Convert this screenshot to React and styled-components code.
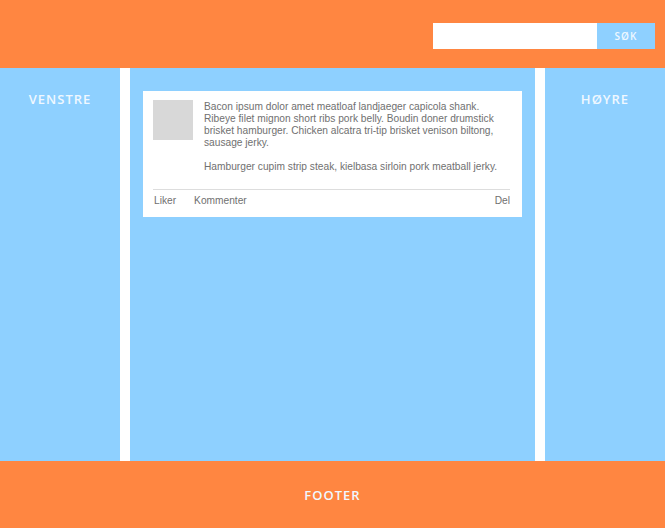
import styled, { createGlobalStyle } from "styled-components";

const GlobalStyle = createGlobalStyle`
  html, body {
    margin: 0;
    padding: 0;
    background: #fff;
  }
  * { box-sizing: border-box; }
`;

const Page = styled.div`
  display: flex;
  flex-direction: column;
  height: 100vh;
  font-family: "Liberation Sans", Arial, sans-serif;
`;

const Header = styled.header`
  height: 68px;
  background: #ff8641;
  display: flex;
  justify-content: flex-end;
  align-items: flex-start;
  padding: 23px 10px 0 0;
`;

const SearchInput = styled.input`
  width: 164px;
  height: 26px;
  border: none;
  outline: none;
  margin: 0;
  padding: 0 6px;
  background: #fff;
`;

const SearchButton = styled.button`
  width: 58px;
  height: 26px;
  border: none;
  margin: 0;
  padding: 0;
  background: #8ed0ff;
  color: #eef8ff;
  font-family: "Open Sans", sans-serif;
  font-size: 10px;
  font-weight: 600;
  letter-spacing: 1px;
`;

const Main = styled.main`
  flex: 1;
  display: flex;
  gap: 10px;
`;

const Side = styled.aside`
  width: 120px;
  background: #8ed0ff;
  padding-top: 22px;
  text-align: center;
`;

const Label = styled.div`
  color: #f0f8ff;
  font-family: "Open Sans", sans-serif;
  font-size: 13px;
  line-height: 18px;
  font-weight: 600;
  letter-spacing: 1px;
`;

const Content = styled.section`
  flex: 1;
  background: #8ed0ff;
  padding: 23px 13px;
`;

const Card = styled.article`
  background: #fff;
  padding: 9px 12px 10px 10px;
`;

const CardBody = styled.div`
  display: flex;
  gap: 11px;
  padding-bottom: 16px;
  border-bottom: 1px solid #dddddd;
`;

const Avatar = styled.div`
  width: 40px;
  height: 40px;
  flex-shrink: 0;
  background: #d8d8d8;
`;

const Text = styled.div`
  max-width: 300px;
  color: #707070;
  font-size: 10.2px;
  line-height: 12px;
  padding-top: 1px;

  p {
    margin: 0 0 12px;
  }
  p:last-child {
    margin: 0;
  }
`;

const Actions = styled.div`
  display: flex;
  gap: 17px;
  padding-top: 5px;
  font-size: 10.2px;
  line-height: 12px;
  color: #707070;
`;

const Action = styled.span`
  margin-left: ${(p) => (p.$push ? "auto" : "0")};
  padding-left: 1px;
`;

const Footer = styled.footer`
  height: 67px;
  background: #ff8641;
  display: flex;
  align-items: center;
  justify-content: center;
`;

export default function App() {
  return (
    <Page>
      <GlobalStyle />
      <Header>
        <SearchInput type="text" />
        <SearchButton>SØK</SearchButton>
      </Header>
      <Main>
        <Side>
          <Label>VENSTRE</Label>
        </Side>
        <Content>
          <Card>
            <CardBody>
              <Avatar />
              <Text>
                <p>
                  Bacon ipsum dolor amet meatloaf landjaeger capicola shank.
                  Ribeye filet mignon short ribs pork belly. Boudin doner
                  drumstick brisket hamburger. Chicken alcatra tri-tip brisket
                  venison biltong, sausage jerky.
                </p>
                <p>
                  Hamburger cupim strip steak, kielbasa sirloin pork meatball
                  jerky.
                </p>
              </Text>
            </CardBody>
            <Actions>
              <Action>Liker</Action>
              <Action>Kommenter</Action>
              <Action $push>Del</Action>
            </Actions>
          </Card>
        </Content>
        <Side>
          <Label>HØYRE</Label>
        </Side>
      </Main>
      <Footer>
        <Label>FOOTER</Label>
      </Footer>
    </Page>
  );
}
